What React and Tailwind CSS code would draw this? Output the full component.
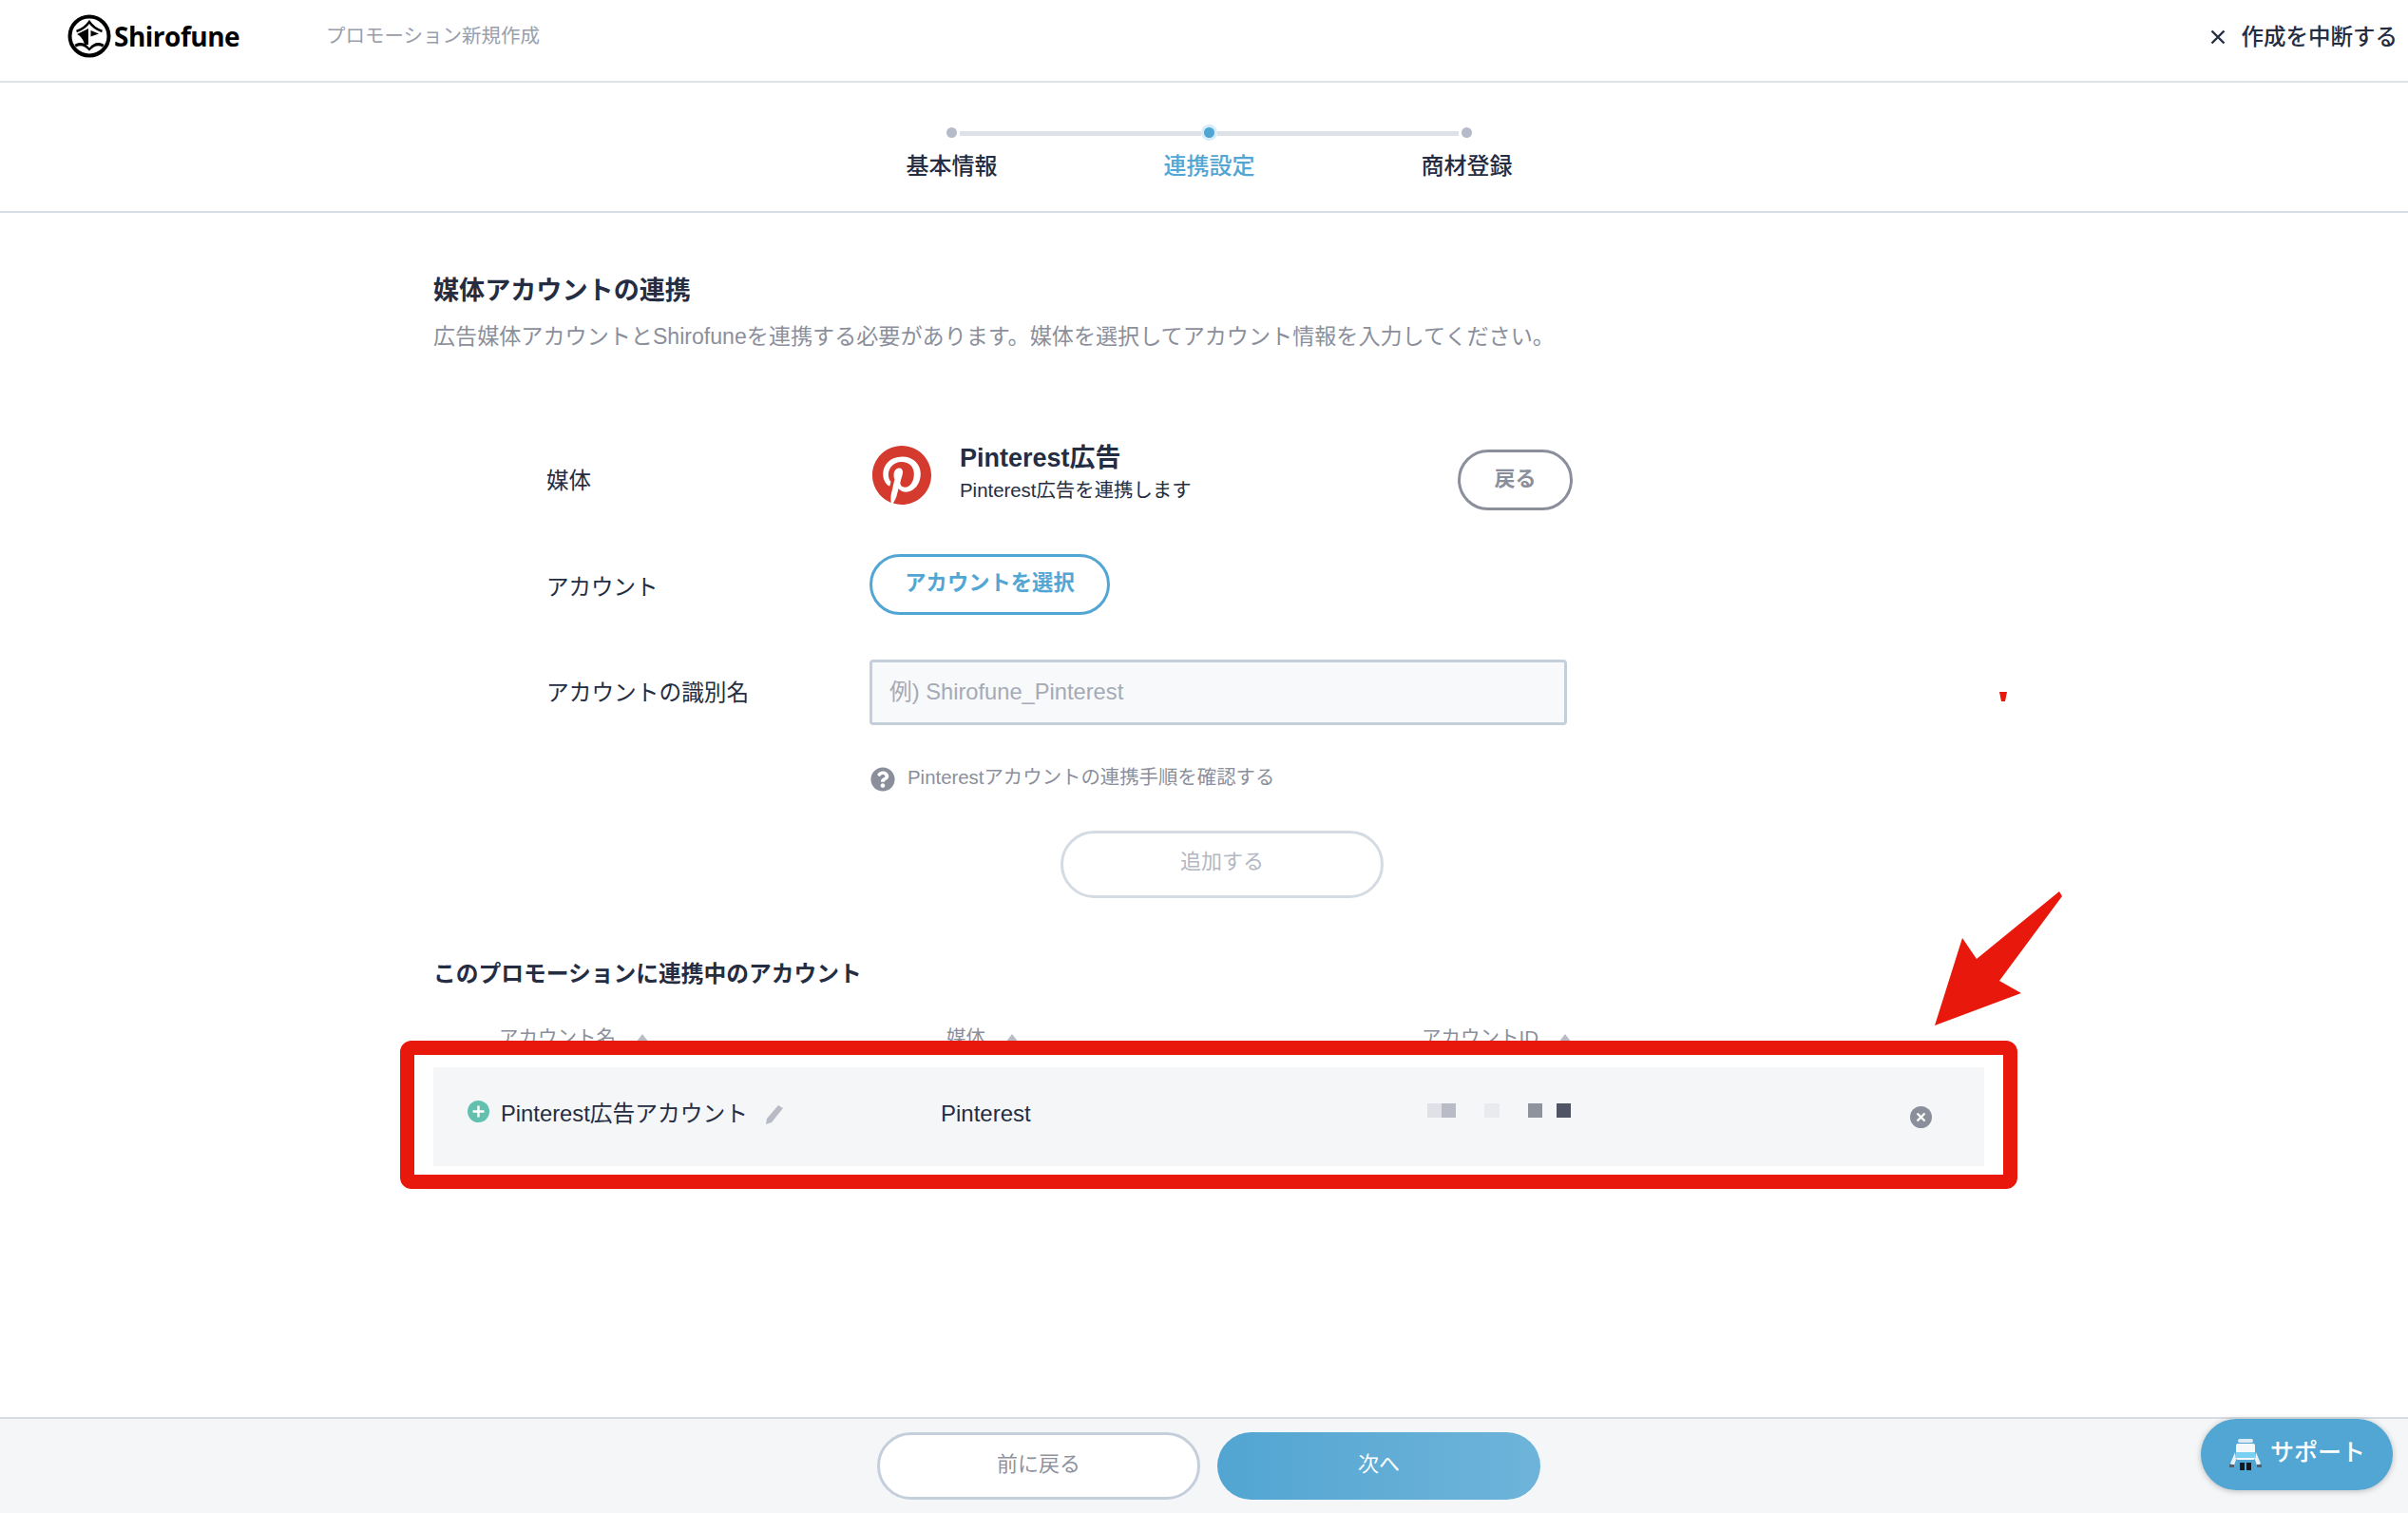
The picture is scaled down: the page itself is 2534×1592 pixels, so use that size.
import React from 'react'
import { FaPinterest, FaQuestionCircle } from 'react-icons/fa'

const fontStack = 'font-["Liberation_Sans","Noto_Sans_CJK_JP",sans-serif]'

function Logo() {
  return (
    <svg viewBox="0 0 46 46" className="w-[46px] h-[46px] shrink-0">
      <circle cx="23" cy="23" r="20.5" fill="none" stroke="#000" strokeWidth="4" />
      <path d="M9.5 18 C15 16 20 12.5 23 8 C26 12.5 31 16 36.5 18" fill="none" stroke="#000" strokeWidth="2.4" />
      <path d="M10 21 L22 15 L22 32 L18 32 C17 27 14 23 10 21 Z" fill="#000" />
      <path d="M24.5 17 L33 20.5 L24.5 23.5 Z" fill="#000" />
      <path d="M7.5 32 C13 28.5 19 30 23 35.5 C27 30 33 28.5 38.5 32 L37 34.5 C32 32 28 33.5 23 38.5 C18 33.5 14 32 9 34.5 Z" fill="#000" />
    </svg>
  )
}

function RobotIcon() {
  return (
    <svg viewBox="0 0 34 34" className="w-[34px] h-[34px] shrink-0">
      <rect x="9" y="0" width="16" height="4" rx="2" fill="#dbeaf3" />
      <rect x="7" y="5" width="20" height="17" rx="2" fill="#f4f8fb" />
      <rect x="7" y="14" width="20" height="6" fill="#79d0f2" />
      <path d="M6 14 L1 26 L5 28 L7 22 Z" fill="#eaf2f7" />
      <path d="M28 14 L33 26 L29 28 L27 22 Z" fill="#eaf2f7" />
      <rect x="11" y="25" width="5" height="8" fill="#141a22" />
      <rect x="18" y="25" width="5" height="8" fill="#141a22" />
      <rect x="0" y="27" width="5" height="3" fill="#56606c" />
      <rect x="29" y="27" width="5" height="3" fill="#56606c" />
    </svg>
  )
}

function SortHead({ children, className }) {
  return (
    <div className={`flex items-center gap-[21px] text-[20.5px] text-[#8b8f9b] ${className}`}>
      <span>{children}</span>
      <svg viewBox="0 0 14 9" className="w-[14px] h-[9px]">
        <path d="M7 0 L14 9 L0 9 Z" fill="#b9bcc6" />
      </svg>
    </div>
  )
}

function Step({ label, active }) {
  return (
    <div className={`text-center text-[24px] leading-[34px] font-medium ${active ? 'text-[#52a6d3]' : 'text-[#252d42]'}`}>{label}</div>
  )
}

export default function App() {
  return (
    <div className={`relative h-[1592px] overflow-hidden flex flex-col bg-white text-[#252d42] ${fontStack}`}>
      {/* Header */}
      <header className="h-[87px] shrink-0 flex items-center border-b-2 border-[#dde2e9] pl-[71px] pr-[11px] pb-[9px]">
        <Logo />
        <span className='ml-[3px] w-[223px] font-["Open_Sans",sans-serif] font-bold text-[28px] text-black tracking-[-0.5px]'>Shirofune</span>
        <span className="text-[20.5px] text-[#9a9eaa]">プロモーション新規作成</span>
        <div className="ml-auto flex items-center gap-[17px] text-[23.5px] font-medium">
          <svg viewBox="0 0 16 16" className="w-[16px] h-[16px] mt-[2px]">
            <path d="M1.5 1.5 L14.5 14.5 M14.5 1.5 L1.5 14.5" stroke="#252d42" strokeWidth="2.4" />
          </svg>
          <span className="mt-[3px]">作成を中断する</span>
        </div>
      </header>

      {/* Stepper */}
      <section className="h-[137px] shrink-0 border-b-2 border-[#d8dde5] pt-[47px]">
        <div className="ml-[996px] w-[553px] flex items-center gap-[3px] h-[11px]">
          <span className="w-[11px] h-[11px] rounded-full bg-[#b5bbc8] shrink-0" />
          <span className="flex-1 h-[5px] bg-[#dde1e8] mt-[1px]" />
          <span className="w-[11px] h-[11px] rounded-full bg-[#4fa5d3] ring-[3px] ring-[#d5ecf8] shrink-0" />
          <span className="flex-1 h-[5px] bg-[#dde1e8] mt-[1px]" />
          <span className="w-[11px] h-[11px] rounded-full bg-[#b5bbc8] shrink-0" />
        </div>
        <div className="ml-[866px] w-[813px] grid grid-cols-3 mt-[13px]">
          <Step label="基本情報" />
          <Step label="連携設定" active />
          <Step label="商材登録" />
        </div>
      </section>

      {/* Main */}
      <main className="pl-[456px] flex flex-col">
        <h1 className="mt-[62px] text-[27.1px] leading-[40px] font-semibold">媒体アカウントの連携</h1>
        <p className="mt-[10px] text-[23.1px] leading-[36px] text-[#8b8f9b]">広告媒体アカウントとShirofuneを連携する必要があります。媒体を選択してアカウント情報を入力してください。</p>

        <div className="pl-[119px] flex flex-col">
          <div className="mt-[97px] h-[72px] flex">
            <div className="w-[340px] self-center mt-[3px] text-[23.5px]">媒体</div>
            <FaPinterest className="w-[64px] h-[64px] text-[#d43a2e] shrink-0 ml-[2px] -mt-[1px]" />
            <div className="ml-[29px] w-[524px]">
              <div className="text-[27px] leading-[28px] font-semibold -mt-[1px]">Pinterest広告</div>
              <div className="mt-[6px] text-[20.4px] leading-[28px]">Pinterest広告を連携します</div>
            </div>
            <button className="w-[121px] h-[64px] self-center rounded-full border-[3px] border-[#8b8f9b] text-[22px] font-semibold text-[#8b8f9b] pb-[3px]">戻る</button>
          </div>

          <div className="mt-[42px] h-[64px] flex">
            <div className="w-[340px] self-center mt-[8px] text-[23.5px]">アカウント</div>
            <button className="w-[253px] h-[64px] rounded-full border-[3px] border-[#52a6d3] text-[22.3px] font-semibold text-[#52a6d3] pb-[3px]">アカウントを選択</button>
          </div>

          <div className="mt-[47px] h-[69px] flex items-center">
            <div className="w-[340px] mt-[2px] text-[23.7px]">アカウントの識別名</div>
            <input
              placeholder="例) Shirofune_Pinterest"
              className="w-[734px] h-[69px] px-[18px] rounded-[4px] border-[3px] border-[#c5cfdc] bg-[#f7f9fb] text-[23.7px] placeholder:text-[#a5aab5]"
            />
          </div>

          <div className="mt-[44px] h-[26px] pl-[341px] flex items-center gap-[13px] text-[20.4px] text-[#8b8f9b]">
            <FaQuestionCircle className="w-[26px] h-[26px] text-[#8b8f9b]" />
            <span className="-mt-[4px]">Pinterestアカウントの連携手順を確認する</span>
          </div>

          <button className="mt-[41px] ml-[541px] w-[340px] h-[71px] rounded-full border-[3px] border-[#d5dbe3] text-[22px] text-[#b3b8c2] pb-[6px]">追加する</button>
        </div>

        <h2 className="mt-[62px] text-[23.75px] leading-[36px] font-semibold">このプロモーションに連携中のアカウント</h2>

        <div className="mt-[33px] h-[32px] pl-[69px] flex items-center leading-[32px]">
          <SortHead className="w-[471px]">アカウント名</SortHead>
          <SortHead className="w-[500px]">媒体</SortHead>
          <SortHead>アカウントID</SortHead>
        </div>

        <div className="mt-[15px] w-[1632px] h-[104px] bg-[#f5f6f8] pl-[36px] pb-[6px] flex items-center">
          <div className="w-[499px] flex items-center">
            <svg viewBox="0 0 23 23" className="w-[23px] h-[23px] -mt-[6px]">
              <circle cx="11.5" cy="11.5" r="11.5" fill="#63c0ae" />
              <path d="M11.5 5.5 V17.5 M5.5 11.5 H17.5" stroke="#fff" strokeWidth="2.4" />
            </svg>
            <span className="ml-[12px] text-[23.75px]">Pinterest広告アカウント</span>
            <svg viewBox="0 0 18 20" className="ml-[19px] w-[18px] h-[20px] mt-[2px]">
              <path d="M13 0 L18 3 L6 18 L0 20 L1 14 Z" fill="#b8bbc4" />
            </svg>
          </div>
          <div className="w-[511px] text-[24px] -ml-[1px]">Pinterest</div>
          <div className="w-[509px] flex h-[15px] -mt-[7px] ml-[1px]">
            <span className="w-[15px] h-[15px] bg-[#dfe1e6]" />
            <span className="w-[15px] h-[15px] bg-[#b9bcc6]" />
            <span className="ml-[30px] w-[16px] h-[15px] bg-[#e9eaee]" />
            <span className="ml-[30px] w-[15px] h-[15px] bg-[#8f939e]" />
            <span className="ml-[15px] w-[15px] h-[15px] bg-[#505565]" />
          </div>
          <svg viewBox="0 0 23 23" className="w-[23px] h-[23px] mt-[6px] -ml-[1px]">
            <circle cx="11.5" cy="11.5" r="11.5" fill="#8b8f9b" />
            <path d="M7.5 7.5 L15.5 15.5 M15.5 7.5 L7.5 15.5" stroke="#fff" strokeWidth="2.4" />
          </svg>
        </div>
      </main>

      {/* Footer */}
      <footer className="mt-auto h-[101px] shrink-0 border-t-2 border-[#d8dde5] bg-[#f5f6f8] flex justify-center gap-[18px] pt-[14px] pl-[10px]">
        <button className="w-[340px] h-[71px] rounded-full border-[3px] border-[#c5cfdc] bg-white text-[22px] text-[#8f939e] pb-[4px]">前に戻る</button>
        <button className="w-[340px] h-[71px] rounded-full bg-gradient-to-r from-[#52a5d2] to-[#6eb4da] text-[22px] text-white pb-[4px]">次へ</button>
      </footer>

      {/* Support button */}
      <button className="absolute left-[2316px] top-[1493px] w-[202px] h-[75px] rounded-full bg-[#52a6d3] shadow-[0_1px_6px_rgba(0,0,0,0.25)] flex items-center pl-[30px] gap-[9px] text-white text-[25px] font-medium">
        <RobotIcon />
        <span className="-mt-[3px]">サポート</span>
      </button>

      {/* Red annotation over the screenshot */}
      <div className="absolute left-[421px] top-[1095px] w-[1702px] h-[156px] rounded-[12px] border-[15px] border-[#e8190c] pointer-events-none" />
      <svg viewBox="0 0 2534 1592" className="absolute inset-0 w-[2534px] h-[1592px] pointer-events-none">
        <path d="M2036 1079 L2065 987 L2080 1009 L2167 938 L2170 943 L2104 1032 L2127 1045 Z" fill="#e8190c" />
        <path d="M2104 728 L2112 728 L2110 738 L2106 738 Z" fill="#e8190c" />
      </svg>
    </div>
  )
}
